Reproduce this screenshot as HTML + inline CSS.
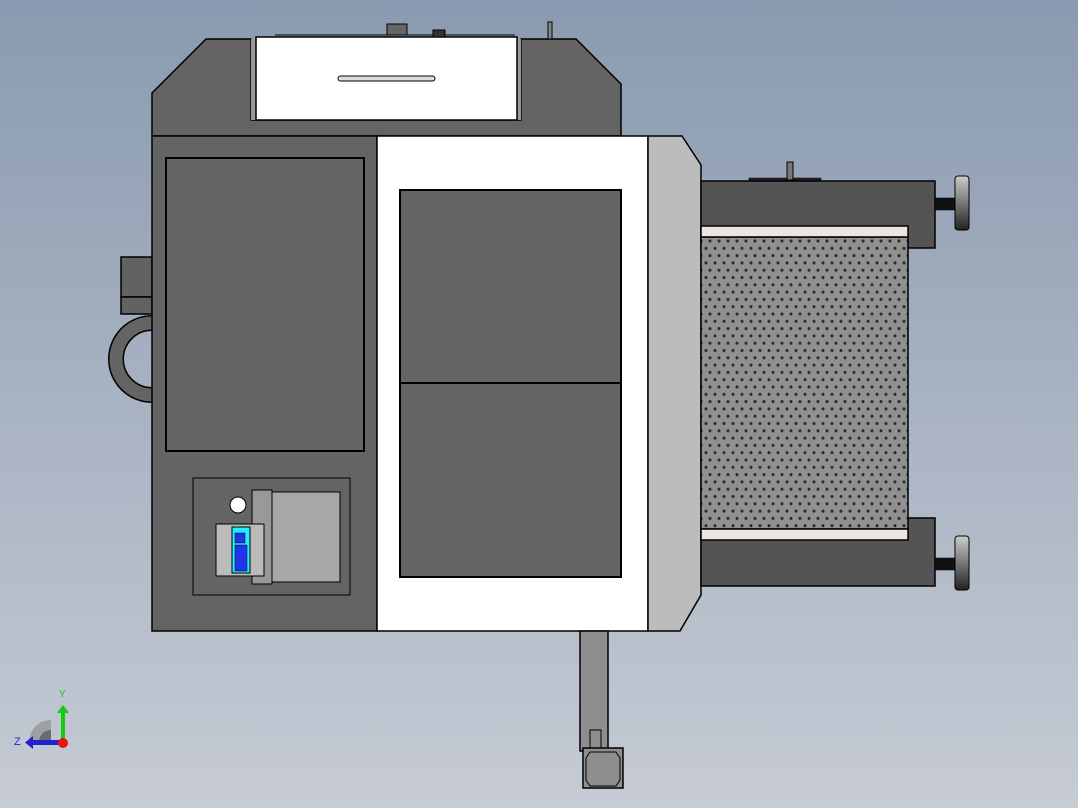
<!DOCTYPE html>
<html><head><style>
html,body{margin:0;padding:0;width:1078px;height:808px;overflow:hidden}
body{background:linear-gradient(#8a9ab0,#c6cbd4)}
svg{display:block}
</style></head><body>
<svg width="1078" height="808" viewBox="0 0 1078 808" xmlns="http://www.w3.org/2000/svg">
<defs>
<pattern id="perf" x="706" y="238" width="18" height="14.6" patternUnits="userSpaceOnUse">
<rect width="18" height="14.6" fill="#909090"/>
<circle cx="4" cy="3" r="1.5" fill="#2a2a2a"/><circle cx="13" cy="3" r="1.5" fill="#2a2a2a"/>
<circle cx="0" cy="10.3" r="1.5" fill="#2a2a2a"/><circle cx="9" cy="10.3" r="1.5" fill="#2a2a2a"/><circle cx="18" cy="10.3" r="1.5" fill="#2a2a2a"/>
</pattern>
<linearGradient id="knobv" x1="0" y1="0" x2="0" y2="1"><stop offset="0" stop-color="#ccc"/><stop offset="1" stop-color="#222"/></linearGradient>
</defs>
<g stroke="#000" stroke-width="1.5">
<circle cx="152" cy="359" r="36" fill="none" stroke="#000" stroke-width="16"/>
<circle cx="152" cy="359" r="36" fill="none" stroke="#646464" stroke-width="13"/>
<rect x="121" y="257" width="31" height="40" fill="#626262"/>
<rect x="121" y="297" width="31" height="17" fill="#626262"/>
<polygon points="152,93 206,39 251,39 251,120 521,120 521,39 576,39 621,84 621,136 152,136" fill="#646464"/>
<rect x="251" y="39" width="270" height="81" fill="#999" stroke="none"/>
<rect x="256" y="37" width="261" height="83" fill="#fff"/>
<line x1="275" y1="35" x2="515" y2="35" stroke-width="1"/>
<rect x="338" y="76" width="97" height="5" rx="2.5" fill="#ddd" stroke-width="1"/>
<rect x="387" y="24" width="20" height="11" fill="#666" stroke-width="1"/>
<rect x="433" y="30" width="12" height="7" fill="#333" stroke-width="1"/>
<rect x="548" y="22" width="4" height="17" fill="#888" stroke-width="1"/>
<rect x="152" y="136" width="225" height="495" fill="#646464"/>
<rect x="166" y="158" width="198" height="293" fill="#646464" stroke-width="2"/>
<rect x="193" y="478" width="157" height="117" fill="#646464" stroke-width="1"/>
<rect x="270" y="492" width="70" height="90" fill="#a8a8a8" stroke-width="1"/>
<rect x="252" y="490" width="20" height="94" fill="#999" stroke-width="1"/>
<rect x="216" y="524" width="48" height="52" fill="#bbb" stroke-width="1"/>
<rect x="232" y="527" width="18" height="46" fill="#2ef" stroke-width="1"/>
<rect x="235" y="545" width="12" height="26" fill="#2233ee" stroke-width="0.5"/>
<rect x="235" y="533" width="10" height="10" fill="#2233ee" stroke-width="0.5"/>
<circle cx="238" cy="505" r="8" fill="#fff" stroke-width="1"/>
<rect x="377" y="136" width="271" height="495" fill="#fff"/>
<rect x="400" y="190" width="221" height="193" fill="#646464" stroke-width="2"/>
<rect x="400" y="383" width="221" height="194" fill="#646464" stroke-width="2"/>
<polygon points="648,136 682,136 701,165 701,595 680,631 648,631" fill="#bcbcbc"/>
<rect x="749" y="178" width="72" height="3" fill="#222" stroke-width="0.5"/>
<rect x="787" y="162" width="6" height="18" fill="#777" stroke-width="1"/>
<rect x="701" y="181" width="234" height="67" fill="#545454"/>
<rect x="701" y="518" width="234" height="68" fill="#545454"/>
<rect x="701" y="237" width="207" height="292" fill="url(#perf)"/>
<rect x="701" y="226" width="207" height="11" fill="#ede5e0"/>
<rect x="701" y="529" width="207" height="11" fill="#ede5e0"/>
<rect x="935" y="198" width="20" height="12" fill="#111" stroke-width="0.5"/>
<rect x="935" y="558" width="20" height="12" fill="#111" stroke-width="0.5"/>
<rect x="955" y="176" width="14" height="54" rx="3" fill="url(#knobv)" stroke-width="1"/>
<rect x="955" y="536" width="14" height="54" rx="3" fill="url(#knobv)" stroke-width="1"/>
<rect x="580" y="631" width="28" height="120" fill="#8e8e8e" stroke-width="1.5"/>
<rect x="590" y="730" width="11" height="18" fill="#8e8e8e" stroke-width="1"/>
<rect x="583" y="748" width="40" height="40" fill="#8e8e8e" stroke-width="1.5"/>
<polygon points="590,752 616,752 620,758 620,780 616,786 590,786 586,780 586,758" fill="#8e8e8e" stroke-width="1"/>
</g>
<path d="M29 742 A22 22 0 0 1 51 720 L51 742 Z" fill="#9ea0a6"/>
<path d="M39 742 A12 12 0 0 1 51 730 L51 742 Z" fill="#6a6c72"/>
<rect x="61" y="712" width="4" height="30" fill="#1c1"/>
<polygon points="57,713 63,705 69,713" fill="#1c1"/>
<rect x="32" y="740" width="30" height="5" fill="#22c"/>
<polygon points="33,736 25,742.5 33,749" fill="#22c"/>
<circle cx="63" cy="743" r="5" fill="#e11"/>
<text x="59" y="697" font-family="Liberation Sans,sans-serif" font-size="10" fill="#1c1">Y</text>
<text x="14" y="745" font-family="Liberation Sans,sans-serif" font-size="11" fill="#22c">Z</text>
</svg>
</body></html>
